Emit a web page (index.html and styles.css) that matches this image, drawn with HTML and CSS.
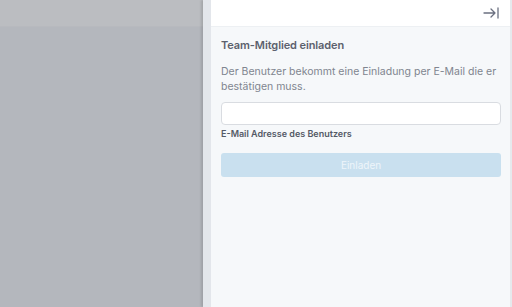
FILE: index.html
```html
<!DOCTYPE html>
<html lang="de">
  <head>
    <meta charset="UTF-8" />
    <meta name="viewport" content="width=device-width, initial-scale=1.0" />
    <title>Team</title>
    <link rel="stylesheet" href="styles.css">
  </head>
  <body>
    <div class="seite">
      <div class="hintergrund">
        <div class="kopf"></div>
        <div class="rest"></div>
      </div>

      <aside class="panel">
        <header class="panel-kopf">
          <button class="schliessen" aria-label="Schliessen">
            <svg width="16" height="12" viewBox="0 0 16 12" fill="none" stroke="#6b7080" stroke-width="1.3" stroke-linecap="round" stroke-linejoin="round">
              <path d="M1 6h11M8 2l4 4-4 4M15 1v10" />
            </svg>
          </button>
        </header>

        <div class="panel-inhalt">
          <h2>Team-Mitglied einladen</h2>
          <p class="text">Der Benutzer bekommt eine Einladung per E-Mail die er bestätigen muss.</p>

          <form class="formular">
            <input type="email" id="email" />
            <label for="email">E-Mail Adresse des Benutzers</label>
            <button type="button" class="einladen" disabled>Einladen</button>
          </form>
        </div>
      </aside>
    </div>
  </body>
</html>
```

FILE: styles.css
```css
* {
  box-sizing: border-box;
}

body {
  margin: 0;
  font-family: "Inter", "Noto Sans", sans-serif;
  overflow: hidden;
}

.seite {
  display: flex;
  height: 307px;
}

.hintergrund {
  width: 203px;
  display: flex;
  flex-direction: column;
  background-color: #b4b7bd;
}

.kopf {
  height: 27px;
  background-color: #bbbdc1;
  border-bottom: 1px solid #b7b9be;
}

.rest {
  flex: 1;
}

.panel {
  flex: 1;
  display: flex;
  flex-direction: column;
  border-left: 8px solid #e3e6eb;
  border-right: 2px solid #e6e9ed;
  box-shadow: -2px 0 2px rgba(0, 0, 0, 0.12);
  background-color: #f6f8fa;
}

.panel-kopf {
  height: 27px;
  background-color: white;
  border-bottom: 1px solid #edf0f3;
  display: flex;
  justify-content: flex-end;
  align-items: center;
  padding-right: 11px;
}

.schliessen {
  border: none;
  background: none;
  padding: 0;
  display: block;
}

.schliessen svg {
  display: block;
}

.panel-inhalt {
  padding: 11px 9px 0 10px;
}

h2 {
  margin: 0;
  font-size: 11px;
  font-weight: 600;
  color: #5c616d;
  letter-spacing: -0.1px;
}

.text {
  margin: 12px 0 0;
  font-size: 10.5px;
  line-height: 15px;
  color: #80858f;
}

.formular {
  margin-top: 8px;
  display: flex;
  flex-direction: column;
}

input {
  height: 23px;
  border: 1px solid #d9dce1;
  border-radius: 4px;
  background-color: white;
}

label {
  margin-top: 3px;
  font-size: 9px;
  font-weight: 600;
  color: #545a66;
}

.einladen {
  margin-top: 14px;
  height: 24px;
  border: none;
  border-radius: 3px;
  background-color: #c9e0ef;
  color: #eef5fa;
  font-family: inherit;
  font-size: 10px;
}
```
